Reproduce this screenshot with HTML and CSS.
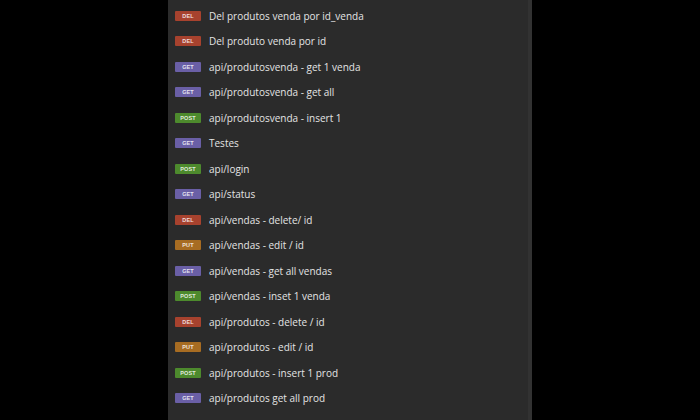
FILE: index.html
```html
<!DOCTYPE html>
<html>
<head>
<meta charset="utf-8">
<link rel="stylesheet" href="styles.css">
</head>
<body>
<div class="stage">
  <div class="panel">
    <ul class="list">
      <li class="item"><span class="badge del">DEL</span><span class="name">Del produtos venda por id_venda</span></li>
      <li class="item"><span class="badge del">DEL</span><span class="name">Del produto venda por id</span></li>
      <li class="item"><span class="badge get">GET</span><span class="name">api/produtosvenda - get 1 venda</span></li>
      <li class="item"><span class="badge get">GET</span><span class="name">api/produtosvenda - get all</span></li>
      <li class="item"><span class="badge post">POST</span><span class="name">api/produtosvenda - insert 1</span></li>
      <li class="item"><span class="badge get">GET</span><span class="name">Testes</span></li>
      <li class="item"><span class="badge post">POST</span><span class="name">api/login</span></li>
      <li class="item"><span class="badge get">GET</span><span class="name">api/status</span></li>
      <li class="item"><span class="badge del">DEL</span><span class="name">api/vendas - delete/ id</span></li>
      <li class="item"><span class="badge put">PUT</span><span class="name">api/vendas - edit / id</span></li>
      <li class="item"><span class="badge get">GET</span><span class="name">api/vendas - get all vendas</span></li>
      <li class="item"><span class="badge post">POST</span><span class="name">api/vendas - inset 1 venda</span></li>
      <li class="item"><span class="badge del">DEL</span><span class="name">api/produtos - delete / id</span></li>
      <li class="item"><span class="badge put">PUT</span><span class="name">api/produtos - edit / id</span></li>
      <li class="item"><span class="badge post">POST</span><span class="name">api/produtos - insert 1 prod</span></li>
      <li class="item"><span class="badge get">GET</span><span class="name">api/produtos get all prod</span></li>
    </ul>
    <div class="scrollbar"></div>
  </div>
</div>
</body>
</html>
```
FILE: styles.css
```css
html, body {
  margin: 0;
  padding: 0;
  background: #000;
}
.stage {
  width: 700px;
  height: 420px;
  display: flex;
  justify-content: flex-start;
  background: #000;
  overflow: hidden;
}
.panel {
  margin-left: 168px;
  width: 364px;
  height: 420px;
  background: #2b2b2b;
  display: flex;
}
.list {
  list-style: none;
  margin: 0;
  padding: 3px 0 0 7px;
  flex: 1;
}
.item {
  height: 25.5px;
  display: flex;
  align-items: center;
  font-family: "Open Sans", "Noto Sans", sans-serif;
  font-size: 10px;
  color: #e4e4e4;
  white-space: nowrap;
}
.badge {
  width: 26px;
  height: 10px;
  border-radius: 1px;
  display: flex;
  align-items: center;
  justify-content: center;
  font-family: "Liberation Sans", sans-serif;
  font-size: 5.5px;
  font-weight: bold;
  color: rgba(255,255,255,0.85);
  margin-right: 8px;
  letter-spacing: 0.1px;
}
.del { background: #a7422e; }
.get { background: #6a5fa6; }
.post { background: #4d8a2d; }
.put { background: #a76c22; }
.scrollbar {
  width: 4px;
  background: #323232;
}
```
